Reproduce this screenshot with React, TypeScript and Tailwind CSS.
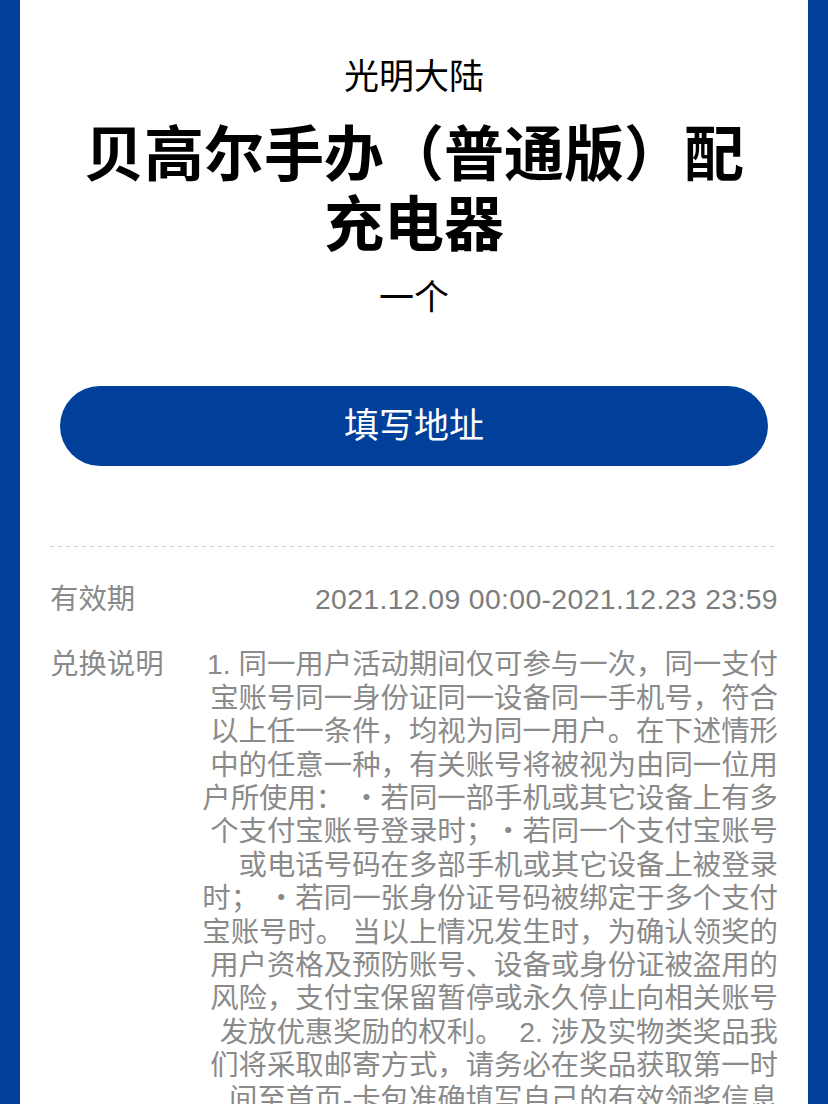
import React from 'react';

// 兑换说明 - 按截图的换行逐行排列
const ruleLines = [
  '1. 同一用户活动期间仅可参与一次，同一支付',
  '宝账号同一身份证同一设备同一手机号，符合',
  '以上任一条件，均视为同一用户。在下述情形',
  '中的任意一种，有关账号将被视为由同一位用',
  '户所使用： ・若同一部手机或其它设备上有多',
  '个支付宝账号登录时；・若同一个支付宝账号',
  '或电话号码在多部手机或其它设备上被登录',
  '时； ・若同一张身份证号码被绑定于多个支付',
  '宝账号时。 当以上情况发生时，为确认领奖的',
  '用户资格及预防账号、设备或身份证被盗用的',
  '风险，支付宝保留暂停或永久停止向相关账号',
  '发放优惠奖励的权利。  2. 涉及实物类奖品我',
  '们将采取邮寄方式，请务必在奖品获取第一时',
  '间至首页-卡包准确填写自己的有效领奖信息',
  '，逾期未填写视为自动放弃领奖资格。',
];

const App = () => {
  return (
    <div
      className="min-h-screen bg-[#00409a] px-5"
      style={{ fontFamily: '"Liberation Sans", "Noto Sans CJK SC", sans-serif' }}
    >
      <div className="min-h-screen bg-white px-[30px] pt-[57px] pb-10">
        {/* 商家 */}
        <p className="text-center text-[35px] leading-[40px] text-black">光明大陆</p>

        {/* 奖品名称 */}
        <h1 className="mt-6 px-5 text-center text-[60px] font-bold leading-[70px] text-black">
          贝高尔手办（普通版）配充电器
        </h1>

        <p className="mt-[17px] text-center text-[35px] leading-[40px] text-black">一个</p>

        <button className="mx-[10px] mt-[68px] flex h-20 w-[708px] items-center justify-center rounded-full bg-[#00409a] text-[35px] text-white">
          填写地址
        </button>

        {/* 虚线分隔 */}
        <div className="mt-20 h-px bg-[linear-gradient(to_right,#cfcfcf_50%,transparent_50%)] bg-[length:8px_1px]" />

        <div className="mt-9 text-[28.4px] leading-[33.4px] text-[#8a8a8a] [text-spacing-trim:space-all]">
          <div className="flex items-start justify-between">
            <span>有效期</span>
            <span className="tracking-[0.35px] text-[#7c7c7c]">2021.12.09 00:00-2021.12.23 23:59</span>
          </div>

          <div className="mt-8 flex items-start">
            <span className="w-[148px] shrink-0">兑换说明</span>
            <div className="min-w-0 flex-1 text-right">
              {ruleLines.map((line, i) => (
                <span key={i} className="block whitespace-pre">
                  {line}
                </span>
              ))}
            </div>
          </div>
        </div>
      </div>
    </div>
  );
};

export default App;
